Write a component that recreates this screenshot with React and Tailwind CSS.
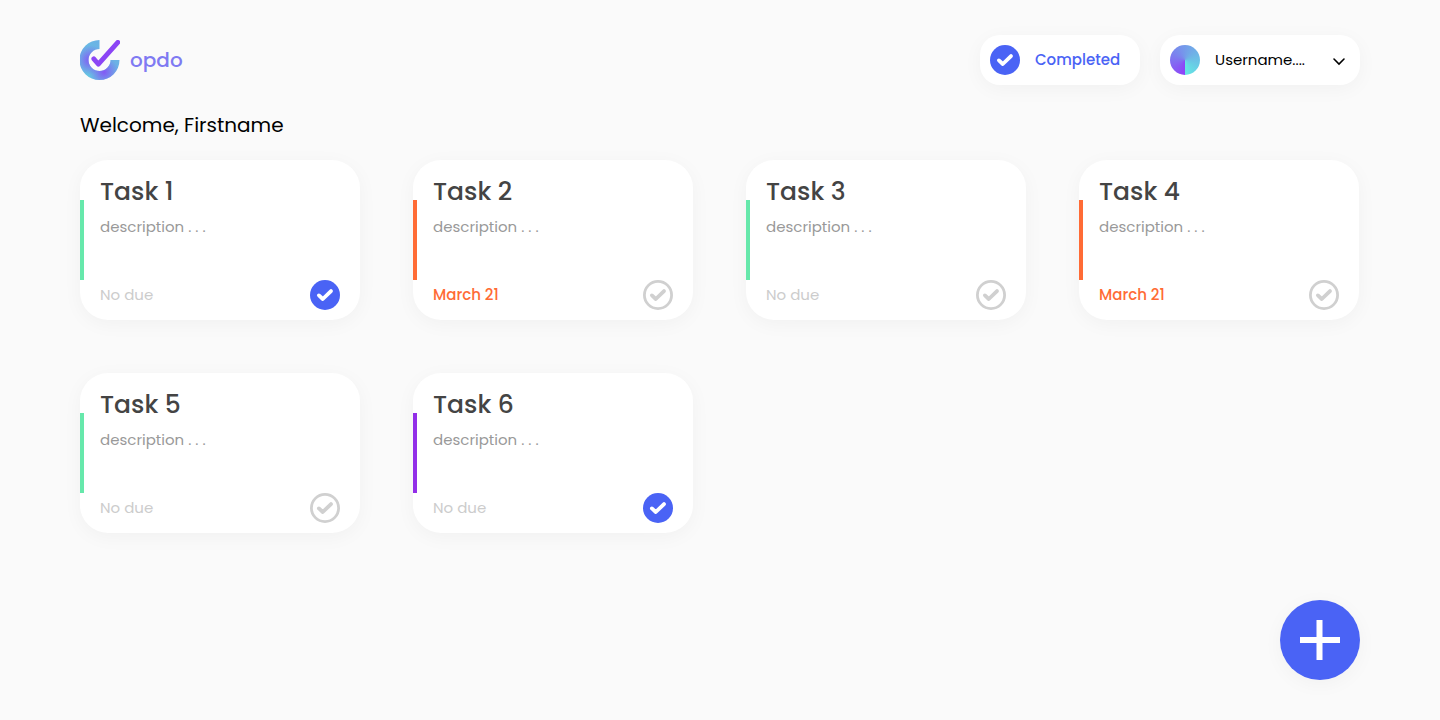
import React from "react";

const tasks = [
  { id: 1, due: "No due", bar: "bg-[#66e8ab]", done: true },
  { id: 2, due: "March 21", bar: "bg-[#ff6b35]", done: false },
  { id: 3, due: "No due", bar: "bg-[#66e8ab]", done: false },
  { id: 4, due: "March 21", bar: "bg-[#ff6b35]", done: false },
  { id: 5, due: "No due", bar: "bg-[#66e8ab]", done: false },
  { id: 6, due: "No due", bar: "bg-[#922ee8]", done: true },
];

function CheckIcon({ done }) {
  return (
    <svg className="size-[30px]" viewBox="0 0 30 30" fill="none" aria-hidden="true">
      {done ? (
        <circle cx="15" cy="15" r="15" fill="#4a63f5" />
      ) : (
        <circle cx="15" cy="15" r="13.6" stroke="#d0d0d0" strokeWidth="2.8" />
      )}
      <path
        d="M8.9 15.4 12.8 19 21 11.1"
        stroke={done ? "#fff" : "#d0d0d0"}
        strokeWidth="3.8"
        strokeLinecap="round"
        strokeLinejoin="round"
      />
    </svg>
  );
}

function Logo() {
  return (
    <svg className="size-10" viewBox="0 0 40 40" fill="none" aria-hidden="true">
      <defs>
        <linearGradient id="ring" gradientUnits="userSpaceOnUse" x1="2" y1="20" x2="20" y2="4">
          <stop offset="0" stopColor="#66c4e2" />
          <stop offset="1" stopColor="#6bb2e5" />
        </linearGradient>
        <radialGradient id="glowLeft" gradientUnits="userSpaceOnUse" cx="10" cy="20" r="15">
          <stop offset="0" stopColor="#8358f5" />
          <stop offset="1" stopColor="#8358f5" stopOpacity="0" />
        </radialGradient>
        <radialGradient id="glowBottom" gradientUnits="userSpaceOnUse" cx="24" cy="32" r="15">
          <stop offset="0" stopColor="#8358f5" />
          <stop offset="1" stopColor="#8358f5" stopOpacity="0" />
        </radialGradient>
      </defs>
      {["ring", "glowLeft", "glowBottom"].map((id) => (
        <path key={id} d="M19.5 0A20 20 0 1 0 39.5 20H30.5A11 11 0 1 1 19.5 9Z" fill={`url(#${id})`} />
      ))}
      <path d="M13.8 18.9 18.4 24.2 37.8 2.4" stroke="#8b45f5" strokeWidth="4.8" strokeLinecap="round" strokeLinejoin="round" />
    </svg>
  );
}

function TaskCard({ task }) {
  return (
    <article className="relative flex h-40 flex-col rounded-[28px] bg-white px-5 pt-3 pb-2.5 shadow-[0_4px_20px_rgba(0,0,0,0.04)]">
      <span className={`absolute top-10 left-0 h-20 w-1 ${task.bar}`} />
      <h2 className="text-[25px] leading-10 font-medium text-[#444]">Task {task.id}</h2>
      <p className="mt-[3px] text-[15px] leading-6 text-[#999]">description . . .</p>
      <div className="mt-auto flex items-center justify-between">
        <span
          className={
            task.due === "No due"
              ? "text-[15px] leading-6 text-[#ccc]"
              : "text-[15px] leading-6 font-medium text-[#ff6b35]"
          }
        >
          {task.due}
        </span>
        <button type="button" aria-label={`Toggle task ${task.id}`} aria-pressed={task.done} className="rounded-full">
          <CheckIcon done={task.done} />
        </button>
      </div>
    </article>
  );
}

export default function App() {
  return (
    <div className="flex min-h-screen flex-col bg-[#fafafa] px-20 pt-[35px] pb-10 font-['Poppins','Inter',sans-serif] text-black">
      <header className="flex items-center justify-between">
        <a href="#" className="flex items-center gap-2.5 text-xl leading-8 font-medium text-[#7f7af2]">
          <Logo />
          opdo
        </a>
        <div className="flex gap-5">
          <button
            type="button"
            className="flex h-[50px] w-40 items-center gap-[15px] rounded-[20px] bg-white px-2.5 text-[15px] font-medium text-[#4a63f5] shadow-[0_4px_20px_rgba(0,0,0,0.04)]"
          >
            <CheckIcon done />
            Completed
          </button>
          <button
            type="button"
            className="flex h-[50px] w-[200px] items-center gap-[15px] rounded-[20px] bg-white pr-3.5 pl-2.5 text-[15px] shadow-[0_4px_20px_rgba(0,0,0,0.04)]"
          >
            <span className="size-[30px] rounded-full bg-[conic-gradient(from_180deg,#8f42f8,#7b83ee,#6eb4e6,#64e8e4)]" />
            Username....
            <svg className="ml-auto h-3.5 w-3.5" viewBox="0 0 14 14" fill="none" aria-hidden="true">
              <path d="M2 6 7 11 12 6" stroke="#000" strokeWidth="1.6" strokeLinecap="round" />
            </svg>
          </button>
        </div>
      </header>

      <main className="mt-6">
        <h1 className="text-xl leading-8">Welcome, Firstname</h1>
        <div className="mt-[19px] grid grid-cols-[repeat(auto-fill,280px)] gap-[53px]">
          {tasks.map((task) => (
            <TaskCard key={task.id} task={task} />
          ))}
        </div>
      </main>

      <button
        type="button"
        aria-label="Add task"
        className="mt-auto flex size-20 items-center justify-center self-end rounded-full bg-[#4a63f5] shadow-[0_4px_20px_rgba(0,0,0,0.04)]"
      >
        <svg className="size-10" viewBox="0 0 40 40" aria-hidden="true">
          <path d="M19.5 0V40M0 20H40" stroke="#fff" strokeWidth="6" />
        </svg>
      </button>
    </div>
  );
}
